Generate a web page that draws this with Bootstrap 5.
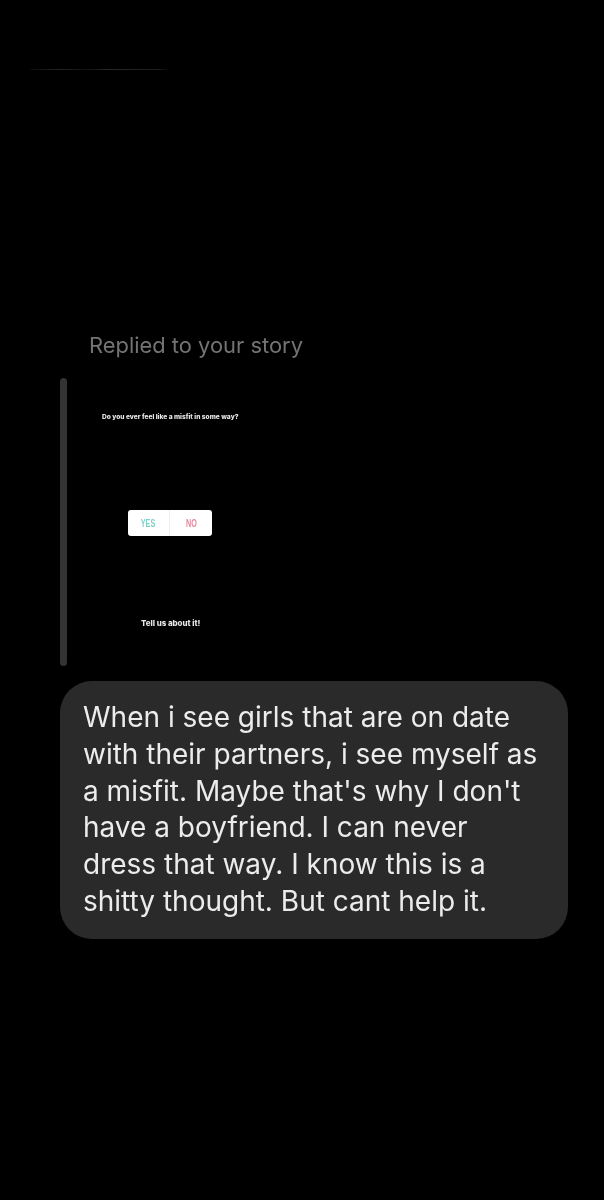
<!DOCTYPE html>
<html lang="en">
<head>
  <meta charset="UTF-8" />
  <meta name="viewport" content="width=device-width, initial-scale=1.0">
  <title>Story reply</title>
  <link href="https://cdn.jsdelivr.net/npm/bootstrap@5.3.2/dist/css/bootstrap.min.css" rel="stylesheet">
  <style>
    body {
      background-color: #000;
      font-family: "Inter", "Liberation Sans", sans-serif;
      height: 1200px;
      overflow: hidden;
    }
    .top-streak {
      height: 1px;
      width: 140px;
      margin: 69px 0 0 30px;
      background: linear-gradient(90deg, #0a0a0a, #242424 20%, #111 40%, #282828 55%, #1c1c1c 92%, #000);
      filter: blur(.5px);
    }
    .thread {
      padding: 261px 36px 0 60px;
    }
    .reply-label {
      margin: 0 0 19px 29px;
      color: #737373;
      font-size: 21.9px;
      line-height: 28px;
      filter: blur(.4px);
    }
    .story-quote {
      height: 288px;
      margin-bottom: 15px;
    }
    .quote-bar {
      width: 7px;
      background-color: #333;
      border-radius: 4px;
      filter: blur(.5px);
    }
    .story-preview {
      width: 220px;
      filter: blur(.4px);
    }
    .story-question {
      margin: 34px 0 0 35px;
      color: #e8e8e8;
      font-size: 6.6px;
      line-height: 10px;
      font-weight: 800;
    }
    .poll-box {
      width: 84px;
      height: 26px;
      margin: 88px 0 0 61px;
      background-color: #fff;
      border-radius: 3px;
    }
    .poll-choice {
      font-family: "Liberation Sans", sans-serif;
      font-size: 10px;
      font-weight: 700;
    }
    .poll-choice span {
      display: block;
      transform: scaleX(.72);
    }
    .poll-yes {
      color: #7fd0c8;
      border-right: 1px solid #eee;
    }
    .poll-no {
      color: #e08a9c;
    }
    .story-cta {
      margin: 82px 0 0 74px;
      color: #e8e8e8;
      font-size: 7.9px;
      line-height: 10px;
      font-weight: 800;
    }
    .reply-bubble {
      height: 258px;
      padding: 18px 24px 0 23px;
      background-color: #2a2a2a;
      border-radius: 32px;
      color: #ececec;
      font-size: 28px;
      line-height: 36.8px;
      filter: blur(.3px);
    }
  </style>
</head>
<body>
  <div class="top-streak"></div>

  <div class="thread">
    <p class="reply-label">Replied to your story</p>

    <div class="story-quote d-flex">
      <div class="quote-bar"></div>
      <div class="story-preview">
        <div class="story-question text-nowrap">Do you ever feel like a misfit in some way?</div>
        <div class="poll-box d-flex">
          <div class="poll-choice poll-yes w-50 d-flex align-items-center justify-content-center"><span>YES</span></div>
          <div class="poll-choice poll-no w-50 d-flex align-items-center justify-content-center"><span>NO</span></div>
        </div>
        <div class="story-cta text-nowrap">Tell us about it!</div>
      </div>
    </div>

    <div class="reply-bubble">
      When i see girls that are on date with their partners, i see myself as a misfit. Maybe that's why I don't have a boyfriend. I can never dress that way. I know this is a shitty thought. But cant help it.
    </div>
  </div>

  <script src="https://cdn.jsdelivr.net/npm/bootstrap@5.3.2/dist/js/bootstrap.bundle.min.js"></script>
</body>
</html>
